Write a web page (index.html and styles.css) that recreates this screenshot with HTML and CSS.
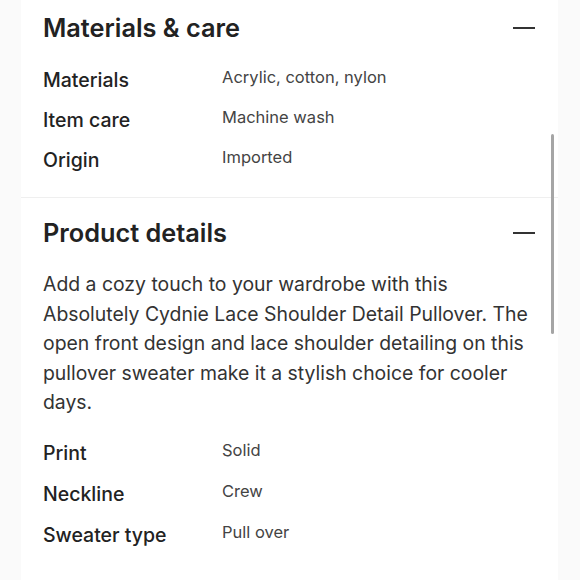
FILE: index.html
```html
<!DOCTYPE html>
<html>
<head>
<meta charset="utf-8">
<link rel="stylesheet" href="styles.css">
</head>
<body>
<div class="page">
  <div class="panel">
    <section class="section first">
      <div class="head">
        <h2 class="title">Materials &amp; care</h2>
        <span class="minus"></span>
      </div>
      <div class="rows">
        <div class="row"><span class="label">Materials</span><span class="value">Acrylic, cotton, nylon</span></div>
        <div class="row"><span class="label">Item care</span><span class="value">Machine wash</span></div>
        <div class="row"><span class="label">Origin</span><span class="value">Imported</span></div>
      </div>
    </section>
    <section class="section second">
      <div class="head">
        <h2 class="title">Product details</h2>
        <span class="minus"></span>
      </div>
      <p class="desc">Add a cozy touch to your wardrobe with this Absolutely Cydnie Lace Shoulder Detail Pullover. The open front design and lace shoulder detailing on this pullover sweater make it a stylish choice for cooler days.</p>
      <div class="rows rows2">
        <div class="row"><span class="label">Print</span><span class="value">Solid</span></div>
        <div class="row"><span class="label">Neckline</span><span class="value">Crew</span></div>
        <div class="row"><span class="label">Sweater type</span><span class="value">Pull over</span></div>
      </div>
    </section>
    <div class="scrollbar"></div>
  </div>
</div>
</body>
</html>
```
FILE: styles.css
```css
html, body {
  margin: 0;
  padding: 0;
  background: #fafafa;
  font-family: Inter, "Noto Sans", sans-serif;
  color: #222;
}
.page {
  display: flex;
  height: 580px;
  overflow: hidden;
}
.panel {
  position: relative;
  margin-left: 21px;
  width: 537px;
  background: #fff;
}
.section {
  padding: 0 22px;
}
.first {
  padding-top: 13px;
  padding-bottom: 17px;
  border-bottom: 1px solid #efefef;
}
.second {
  padding-top: 20px;
}
.head {
  display: flex;
  justify-content: space-between;
  align-items: center;
  height: 30px;
}
.title {
  margin: 0;
  font-size: 25.3px;
  font-weight: 600;
  line-height: 30px;
  color: #222;
}
.minus {
  display: block;
  width: 22px;
  height: 2px;
  background: #333;
  margin-right: 1px;
}
.rows {
  margin-top: 17px;
}
.row {
  display: flex;
  align-items: flex-start;
  height: 40px;
}
.rows2 {
  margin-top: 15px;
}
.rows2 .row {
  height: 41px;
}
.label {
  width: 179px;
  flex: none;
  font-size: 19.5px;
  line-height: 40px;
  font-weight: 500;
  color: #222;
}
.value {
  font-size: 16.5px;
  line-height: 34px;
  color: #444;
}
.desc {
  margin: 22px 0 0;
  font-size: 19.4px;
  line-height: 29.5px;
  color: #333;
}
.scrollbar {
  position: absolute;
  left: 530px;
  top: 134px;
  width: 3px;
  height: 200px;
  border-radius: 2px;
  background: #a5a5a5;
}
```
